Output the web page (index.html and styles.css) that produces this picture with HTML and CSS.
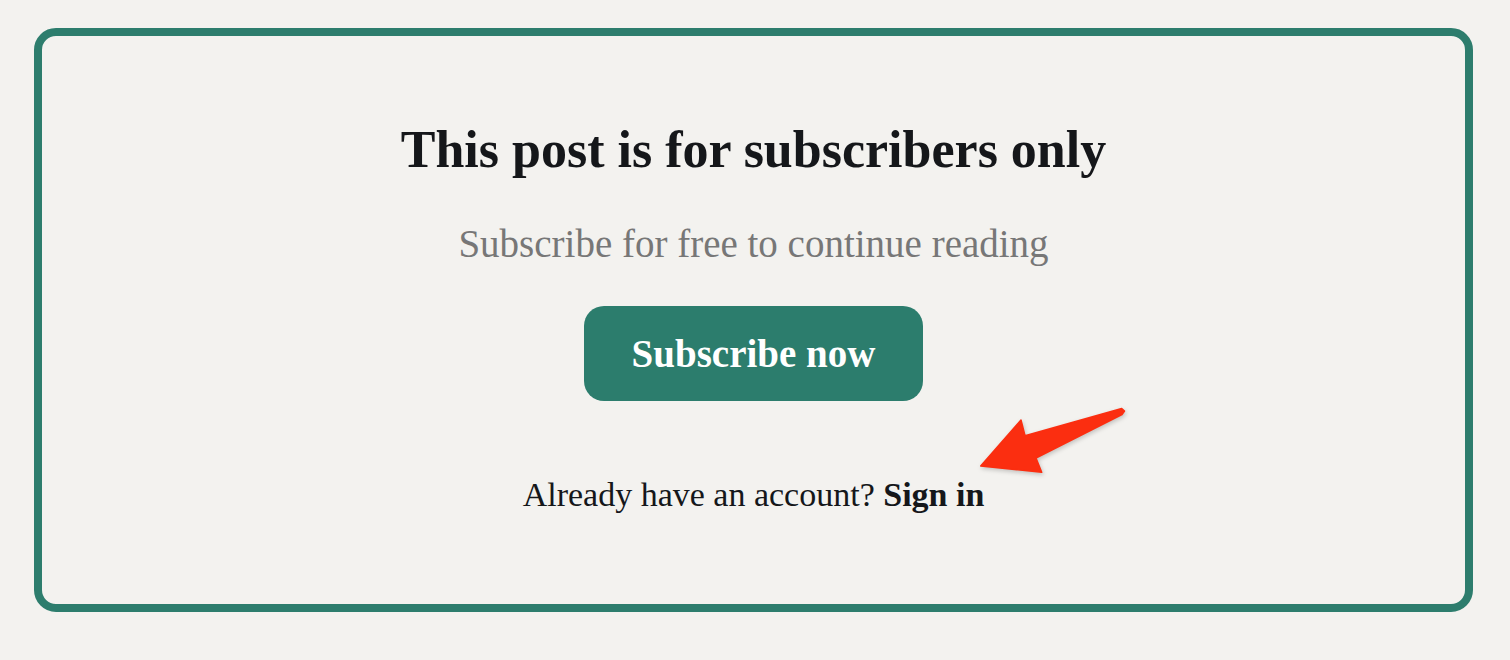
FILE: index.html
```html
<!DOCTYPE html>
<html lang="en">

<head>
    <meta charset="UTF-8">
    <meta name="viewport" content="width=device-width, initial-scale=1.0">
    <title>Subscribers only</title>
    <link rel="stylesheet" href="styles.css">
</head>

<body>
    <!-- 订阅提示卡片 -->
    <div class="paywall">
        <h2 class="title">This post is for subscribers only</h2>
        <p class="sub">Subscribe for free to continue reading</p>
        <a class="btn" href="#">Subscribe now</a>
        <p class="signin">Already have an account? <a href="#">Sign in</a></p>
    </div>

    <!-- 指向登录的箭头 -->
    <svg class="arrow" width="180" height="90" viewBox="0 0 180 90">
        <polygon points="161.7,13.5 164.5,16 162,19.5 76,63 81.7,77.3 20.7,71 61,25 65,40.7" fill="#fb2e10"
            stroke="#fb2e10" stroke-width="1.5" stroke-linejoin="round" />
    </svg>
</body>

</html>
```

FILE: styles.css
```css
* {
    margin: 0;
    padding: 0;
    box-sizing: border-box;
}

body {
    position: relative;
    width: 1510px;
    height: 660px;
    background-color: #f3f2ef;
    font-family: "Liberation Serif", Georgia, serif;
    color: #15171a;
    padding: 28px 37px 0 34px;
}

.paywall {
    display: flex;
    flex-direction: column;
    align-items: center;
    height: 584px;
    border: 8px solid #2d7d6d;
    border-radius: 22px;
    padding-top: 82px;
}

.title {
    font-size: 52px;
    font-weight: 700;
    line-height: 64px;
}

.sub {
    margin-top: 40px;
    font-size: 39px;
    line-height: 44px;
    color: #777;
}

.btn {
    display: flex;
    align-items: center;
    justify-content: center;
    margin-top: 40px;
    width: 339px;
    height: 95px;
    border-radius: 20px;
    background-color: #2c7d6d;
    color: #fff;
    font-size: 39px;
    font-weight: 700;
    text-decoration: none;
}

.signin {
    margin-top: 72px;
    font-size: 34px;
    line-height: 44px;
}

.signin a {
    color: #15171a;
    font-weight: 700;
    text-decoration: none;
}

.arrow {
    position: absolute;
    left: 960px;
    top: 395px;
    filter: drop-shadow(1px 2px 2px rgba(0, 0, 0, .2));
}
```
